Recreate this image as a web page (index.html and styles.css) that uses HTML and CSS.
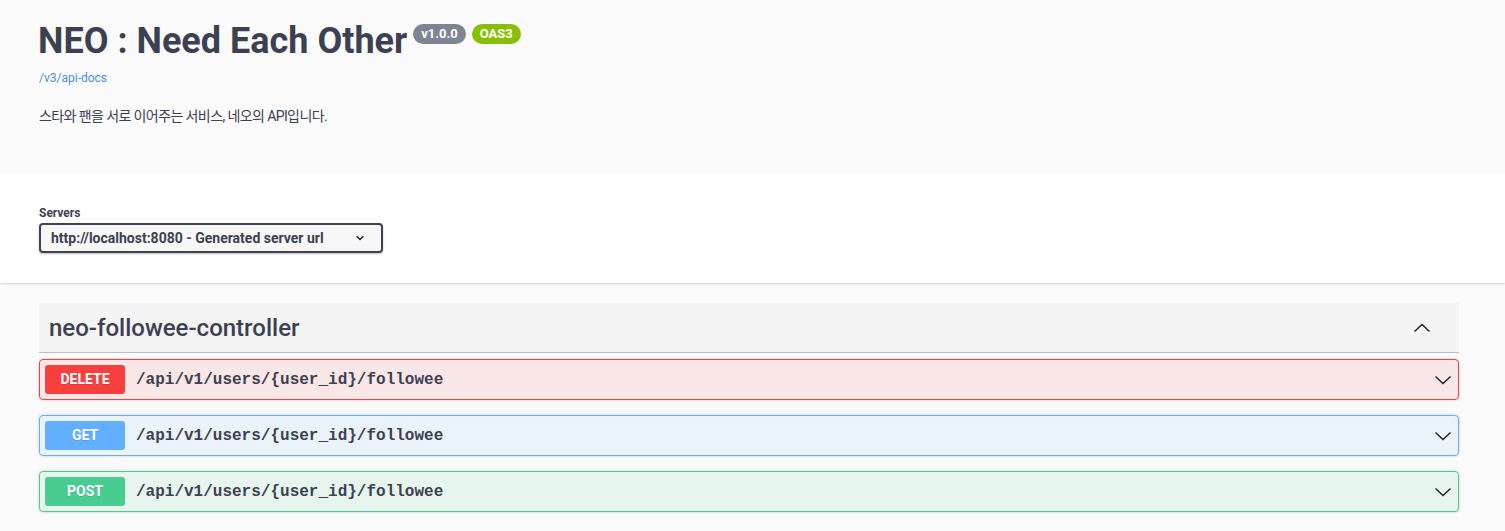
FILE: index.html
```html
<!DOCTYPE html>
<html lang="ko">
<head>
    <meta charset="UTF-8">
    <meta name="viewport" content="width=device-width, initial-scale=1.0">
    <title>NEO : Need Each Other</title>
    <link rel="stylesheet" href="styles.css">
</head>
<body>
    <div class="swagger-ui">
        <section class="info-section">
            <div class="wrapper">
                <hgroup class="main">
                    <h2 class="title">NEO : Need Each Other<span class="badges"><small class="version">v1.0.0</small><small class="version oas">OAS3</small></span></h2>
                    <a class="url" href="#">/v3/api-docs</a>
                </hgroup>
                <div class="description">
                    <p>스타와 팬을 서로 이어주는 서비스, 네오의 API입니다.</p>
                </div>
            </div>
        </section>

        <section class="scheme-container">
            <div class="wrapper">
                <span class="servers-title">Servers</span>
                <div class="servers">
                    <span class="select-value">http://localhost:8080 - Generated server url</span>
                    <svg class="select-arrow" width="10" height="10" viewBox="0 0 10 10">
                        <path d="M2 3.5 L5 6.5 L8 3.5" fill="none" stroke="#222" stroke-width="1.4" stroke-linecap="round" stroke-linejoin="round"/>
                    </svg>
                </div>
            </div>
        </section>

        <section class="wrapper operations">
            <div class="opblock-tag">
                <h3 class="tag-name">neo-followee-controller</h3>
                <svg class="arrow" width="20" height="20" viewBox="0 0 20 20">
                    <path d="M2.5 13.5 L10 6.5 L17.5 13.5" fill="none" stroke="#222" stroke-width="1.4"/>
                </svg>
            </div>

            <div class="opblock opblock-delete">
                <span class="method">DELETE</span>
                <span class="path">/api/v1/users/{user_id}/followee</span>
                <svg class="arrow" width="20" height="20" viewBox="0 0 20 20">
                    <path d="M2.5 6.5 L10 13.5 L17.5 6.5" fill="none" stroke="#222" stroke-width="1.4"/>
                </svg>
            </div>

            <div class="opblock opblock-get">
                <span class="method">GET</span>
                <span class="path">/api/v1/users/{user_id}/followee</span>
                <svg class="arrow" width="20" height="20" viewBox="0 0 20 20">
                    <path d="M2.5 6.5 L10 13.5 L17.5 6.5" fill="none" stroke="#222" stroke-width="1.4"/>
                </svg>
            </div>

            <div class="opblock opblock-post">
                <span class="method">POST</span>
                <span class="path">/api/v1/users/{user_id}/followee</span>
                <svg class="arrow" width="20" height="20" viewBox="0 0 20 20">
                    <path d="M2.5 6.5 L10 13.5 L17.5 6.5" fill="none" stroke="#222" stroke-width="1.4"/>
                </svg>
            </div>
        </section>
    </div>
</body>
</html>
```

FILE: styles.css
```css
body {
    margin: 0;
    padding: 0;
    background-color: #fafafa;
    font-family: Roboto, "Noto Sans CJK KR", sans-serif;
    color: #3b4151;
}

.wrapper {
    max-width: 1420px;
    margin: 0 46px 0 39px;
}

/* info block */
.info-section {
    height: 174px;
    padding-top: 20px;
    box-sizing: border-box;
}

.title {
    margin: 0 0 0 -1px;
    font-size: 36px;
    line-height: 43px;
    font-weight: 700;
    color: #3b4151;
    display: flex;
    align-items: flex-start;
}

.badges {
    display: flex;
    gap: 6px;
    margin-left: 6px;
    margin-top: 4px;
}

.version {
    display: inline-block;
    background-color: #7d8492;
    color: white;
    font-size: 13px;
    font-weight: 700;
    line-height: 16px;
    padding: 2px 8px;
    border-radius: 57px;
}

.version.oas {
    background-color: #89bf04;
}

.url {
    display: block;
    margin-top: 7px;
    font-size: 12px;
    line-height: 16px;
    color: #4990e2;
    text-decoration: none;
}

.description p {
    margin: 20px 0 0;
    font-size: 14px;
    line-height: 20px;
    letter-spacing: -0.6px;
}

/* servers */
.scheme-container {
    background: white;
    box-shadow: 0 1px 2px 0 rgba(0, 0, 0, 0.15);
    padding: 30px 0;
    margin-bottom: 20px;
}

.servers-title {
    display: block;
    font-size: 12px;
    font-weight: 700;
    line-height: 18px;
}

.servers {
    display: inline-flex;
    align-items: center;
    justify-content: space-between;
    box-sizing: border-box;
    width: 344px;
    height: 30px;
    margin-top: 1px;
    padding: 0 16px 0 10px;
    border: 2px solid #41444e;
    border-radius: 4px;
    background-color: #f7f7f7;
    box-shadow: 0 1px 2px 0 rgba(0, 0, 0, 0.25);
    font-size: 14px;
    font-weight: 700;
}

/* operations */
.opblock-tag {
    display: flex;
    align-items: center;
    justify-content: space-between;
    height: 49px;
    padding: 0 27px 0 10px;
    background-color: #f4f4f4;
    border-bottom: 1px solid rgba(59, 65, 81, 0.3);
    margin-bottom: 6px;
}

.tag-name {
    margin: 0;
    font-size: 24px;
    font-weight: 500;
}

.opblock {
    display: flex;
    align-items: center;
    padding: 5px;
    margin-bottom: 15px;
    border: 1px solid;
    border-radius: 4px;
    box-shadow: 0 0 3px rgba(0, 0, 0, 0.19);
}

.method {
    min-width: 80px;
    padding: 6px 0;
    line-height: 17px;
    border-radius: 3px;
    color: white;
    font-size: 14px;
    font-weight: 700;
    text-align: center;
    text-shadow: 0 1px 0 rgba(0, 0, 0, 0.1);
}

.path {
    flex: 1;
    padding: 0 11px;
    font-family: "Liberation Mono", monospace;
    font-size: 16px;
    font-weight: 700;
    color: #3b4151;
}

.opblock-delete {
    background-color: rgba(249, 62, 62, 0.1);
    border-color: #f93e3e;
}

.opblock-delete .method {
    background-color: #f93e3e;
}

.opblock-get {
    background-color: rgba(97, 175, 254, 0.1);
    border-color: #61affe;
}

.opblock-get .method {
    background-color: #61affe;
}

.opblock-post {
    background-color: rgba(73, 204, 144, 0.1);
    border-color: #49cc90;
}

.opblock-post .method {
    background-color: #49cc90;
}
```
